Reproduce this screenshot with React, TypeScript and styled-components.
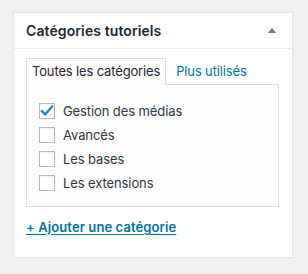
import React from "react";
import styled, { createGlobalStyle } from "styled-components";

const Global = createGlobalStyle`
  html, body { margin: 0; padding: 0; background: #f1f1f1; }
  body { font-family: Inter, "Noto Sans", "Liberation Sans", sans-serif; color: #23282d; }
`;

const Page = styled.div`
  padding: 12px 15px 0 13px;
`;

const Box = styled.div`
  background: #fff;
  border: 1px solid #e5e5e5;
  box-shadow: 0 1px 1px rgba(0, 0, 0, 0.04);
`;

const Header = styled.div`
  display: flex;
  align-items: center;
  justify-content: space-between;
  height: 35px;
  padding: 0 12px;
  border-bottom: 1px solid #eee;
`;

const Title = styled.h2`
  margin: 0;
  font-size: 14px;
  font-weight: 600;
  color: #23282d;
  letter-spacing: 0.1px;
`;

const Arrow = styled.span`
  width: 0;
  height: 0;
  border-left: 4px solid transparent;
  border-right: 4px solid transparent;
  border-bottom: 5px solid #72777c;
  margin-right: 4px;
  margin-top: 0;
`;

const Inside = styled.div`
  padding: 9px 13px 22px 12px;
`;

const Tabs = styled.ul`
  display: flex;
  align-items: flex-end;
  list-style: none;
  margin: 0;
  padding: 0;
`;

const Tab = styled.li<{ $active?: boolean }>`
  font-size: 13px;
  line-height: 18px;
  letter-spacing: -0.15px;
  padding: 3px 5px 4px 5px;
  margin-right: 4px;
  border: 1px solid ${(p) => (p.$active ? "#ddd" : "transparent")};
  border-bottom: ${(p) => (p.$active ? "1px solid #fdfdfd" : "1px solid transparent")};
  background: ${(p) => (p.$active ? "#fdfdfd" : "transparent")};
  color: ${(p) => (p.$active ? "#23282d" : "#0073aa")};
  margin-bottom: -1px;
  position: relative;
  z-index: 1;
`;

const Panel = styled.div`
  background: #fdfdfd;
  border: 1px solid #ddd;
  padding: 18px 12px 15px 12px;
  display: flex;
  flex-direction: column;
  gap: 8px;
`;

const Row = styled.label`
  display: flex;
  align-items: center;
  gap: 8px;
  font-size: 13px;
  letter-spacing: -0.1px;
  height: 16px;
  color: #32373c;
`;

const Check = styled.span`
  box-sizing: border-box;
  width: 16px;
  height: 16px;
  border: 1px solid #b4b9be;
  background: #fff;
  box-shadow: inset 0 1px 2px rgba(0, 0, 0, 0.07);
  display: flex;
  align-items: center;
  justify-content: center;
  flex: none;
`;

const AddLink = styled.a`
  display: block;
  width: max-content;
  margin-top: 12px;
  font-size: 13px;
  line-height: 16px;
  font-weight: 600;
  letter-spacing: 0.1px;
  color: #0073aa;
  text-decoration: underline;
  text-underline-offset: 2px;
`;

const items = [
  { label: "Gestion des médias", checked: true },
  { label: "Avancés", checked: false },
  { label: "Les bases", checked: false },
  { label: "Les extensions", checked: false },
];

export default function App() {
  return (
    <Page>
      <Global />
      <Box>
        <Header>
          <Title>Catégories tutoriels</Title>
          <Arrow />
        </Header>
        <Inside>
          <Tabs>
            <Tab $active>Toutes les catégories</Tab>
            <Tab>Plus utilisés</Tab>
          </Tabs>
          <Panel>
            {items.map((it) => (
              <Row key={it.label}>
                <Check>
                  {it.checked && (
                    <svg width="14" height="14" viewBox="0 0 14 14">
                      <path d="M2 7.2 L5.2 10.4 L12 2.6" fill="none" stroke="#1e8cbe" strokeWidth="2.4" strokeLinecap="square" />
                    </svg>
                  )}
                </Check>
                {it.label}
              </Row>
            ))}
          </Panel>
          <AddLink href="#">+ Ajouter une catégorie</AddLink>
        </Inside>
      </Box>
    </Page>
  );
}
